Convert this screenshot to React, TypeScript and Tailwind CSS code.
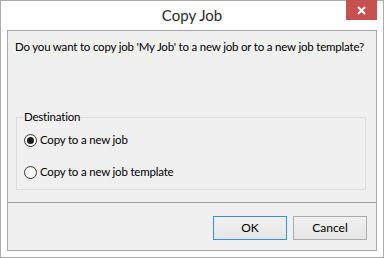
import React, { useState } from 'react';

const font = { fontFamily: 'Lato, "Liberation Sans", sans-serif' };

function Radio({ checked, label, onClick }: { checked: boolean; label: string; onClick: () => void }) {
  return (
    <div className="flex items-center h-[16px] cursor-default" onClick={onClick}>
      <div className="w-[13px] h-[13px] rounded-full border border-[#333333] bg-gradient-to-b from-[#f4f4f4] to-white flex items-center justify-center">
        {checked && <div className="w-[7px] h-[7px] rounded-full bg-[#1c1c1c]" />}
      </div>
      <span className="ml-[3px] text-[11.5px] leading-[16px] tracking-[-0.2px] text-black">{label}</span>
    </div>
  );
}

export default function App() {
  const [dest, setDest] = useState<'job' | 'template'>('job');

  return (
    <div
      className="w-[384px] h-[258px] border border-[#ababab] bg-white flex flex-col px-[6px] pb-[6px]"
      style={font}
    >
      {/* Title bar */}
      <div className="h-[29px] grid grid-cols-[1fr_auto_1fr] items-start">
        <div />
        <div className="text-[15px] leading-[20px] text-[#2b2b2b] mt-[4px]">Copy Job</div>
        <div className="flex justify-end">
          <button className="w-[31px] h-[20px] bg-[#c75050] flex items-center justify-center -mt-[1px]">
            <svg width="9" height="9" viewBox="0 0 9 9">
              <path d="M1 1 L8 8 M8 1 L1 8" stroke="white" strokeWidth="2" />
            </svg>
          </button>
        </div>
      </div>

      {/* Client area */}
      <div className="flex-1 flex flex-col bg-[#f0f0f0] border border-[#a8a8a8]">
        <div className="flex-1 flex flex-col">
          <p className="pl-[7px] pt-[8px] text-[11.5px] leading-[16px] tracking-[-0.2px] text-black whitespace-nowrap">
            Do you want to copy job 'My Job' to a new job or to a new job template?
          </p>

          <fieldset className="mt-[54px] ml-[8px] mr-[10px] border border-[#dcdcdc] px-[7px] pb-[9px]">
            <legend className="text-[11.5px] leading-[16px] tracking-[-0.2px] text-black px-0">Destination</legend>
            <div className="flex flex-col gap-[16px] mt-[7px]">
              <Radio checked={dest === 'job'} label="Copy to a new job" onClick={() => setDest('job')} />
              <Radio checked={dest === 'template'} label="Copy to a new job template" onClick={() => setDest('template')} />
            </div>
          </fieldset>
        </div>

        {/* Button bar */}
        <div className="h-[48px] border-t border-[#a0a0a0] flex justify-end items-start gap-[6px] pt-[13px] pr-[9px]">
          <button className="w-[74px] h-[24px] border border-[#3c8ee4] bg-gradient-to-b from-[#f0f0f0] to-[#e5e5e5] text-[12px] text-black">
            OK
          </button>
          <button className="w-[74px] h-[24px] border border-[#acacac] bg-gradient-to-b from-[#f0f0f0] to-[#e5e5e5] text-[12px] text-black">
            Cancel
          </button>
        </div>
      </div>
    </div>
  );
}
